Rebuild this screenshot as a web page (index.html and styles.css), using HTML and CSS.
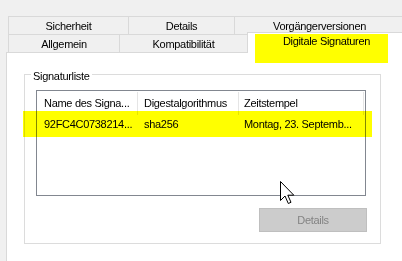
FILE: index.html
```html
<!doctype html>
<html><head>
<meta charset="utf-8">
<title>Eigenschaften - Digitale Signaturen</title>
<link rel="stylesheet" href="styles.css">
</head><body>
<div class="dialog">
	<div class="tabs">
		<div class="tab-row">
			<div class="tab tab-sicherheit">Sicherheit</div>
			<div class="tab tab-details">Details</div>
			<div class="tab tab-versionen">Vorgängerversionen</div>
		</div>
		<div class="tab-row row-front">
			<div class="tab tab-allgemein">Allgemein</div>
			<div class="tab tab-kompat">Kompatibilität</div>
			<div class="tab tab-active">Digitale Signaturen<span class="mark mark-tab"></span></div>
		</div>
	</div>
	<div class="page">
		<div class="group">
			<span class="group-title">Signaturliste</span>
			<div class="list">
				<div class="list-head">
					<div class="cell col-name">Name des Signa...</div>
					<div class="cell col-algo">Digestalgorithmus</div>
					<div class="cell col-time">Zeitstempel</div>
				</div>
				<div class="list-row">
					<div class="cell col-name">92FC4C0738214...</div>
					<div class="cell col-algo">sha256</div>
					<div class="cell col-time">Montag, 23. Septemb...</div>
				</div>
			</div>
			<button class="btn" disabled>Details</button>
			<span class="mark mark-row"></span>
		</div>
		<svg class="cursor" width="16" height="24" viewBox="0 0 16 24">
			<path d="M0.5 0.5 V19.5 L5 15 L8.3 22.5 L11 21.3 L7.8 14.2 H13.8 Z" fill="#fff" stroke="#000" stroke-width="1" stroke-linejoin="miter"/>
		</svg>
	</div>
</div>
</body></html>
```
FILE: styles.css
```css
body {
	margin: 0;
	background: #f0f0f0;
	font: 11px/16px 'Liberation Sans', Arial, sans-serif;
	letter-spacing: -0.3px;
	color: #000;
	overflow: hidden;
}

.dialog {
	width: 402px;
	height: 261px;
	display: flex;
	flex-direction: column;
}

.tabs {
	padding: 16px 0 0 8px;
	white-space: nowrap;
}

.tab-row {
	display: flex;
	align-items: flex-start;
	height: 18px;
}

.tab {
	flex: none;
	box-sizing: border-box;
	height: 18px;
	border: 1px solid #d9d9d9;
	border-bottom: none;
	background: #f0f0f0;
	text-align: center;
	line-height: 16px;
	padding-top: 1px;
}
.tab + .tab {
	margin-left: -1px;
}

.tab-sicherheit { width: 121px; }
.tab-details { width: 107px; }
.tab-versionen { width: 171px; }
.tab-allgemein { width: 112px; }
.tab-kompat { width: 129px; }

.tab-active {
	position: relative;
	z-index: 1;
	width: 159px;
	height: 21px;
	margin-top: -2px;
	background: #fff;
	padding-top: 0;
}

.mark {
	position: absolute;
	background: #ffff00;
	mix-blend-mode: multiply;
}
.mark-tab {
	left: 7px;
	top: 1px;
	width: 133px;
	height: 29px;
}
.mark-row {
	left: -2px;
	top: 36px;
	width: 349px;
	height: 26px;
}

.page {
	position: relative;
	flex: 1;
	margin-left: 6px;
	border-left: 1px solid #d9d9d9;
	border-top: 1px solid #d9d9d9;
	background: #fff;
}

.group {
	position: relative;
	box-sizing: border-box;
	width: 357px;
	height: 170px;
	margin: 21px 0 0 17px;
	border: 1px solid #dcdcdc;
	display: flex;
	flex-direction: column;
	align-items: flex-start;
}

.group-title {
	position: absolute;
	left: 6px;
	top: -7px;
	padding: 0 2px;
	background: #fff;
}

.list {
	box-sizing: border-box;
	width: 330px;
	height: 106px;
	margin: 15px 0 0 11px;
	border: 1px solid #828790;
}

.list-head, .list-row {
	display: flex;
	white-space: nowrap;
}

.list-head {
	height: 24px;
}
.list-head .cell {
	box-sizing: border-box;
	height: 23px;
	margin-top: 1px;
	padding-top: 3px;
	border-right: 1px solid #e5e5e5;
}

.list-row {
	height: 18px;
}
.list-row .cell {
	padding-top: 1px;
}

.cell {
	flex: none;
	box-sizing: border-box;
	overflow: hidden;
	padding-left: 6px;
}
.col-name { width: 101px; padding-left: 7px; }
.col-algo { width: 101px; }
.col-time { width: 125px; padding-left: 5px; }

.btn {
	align-self: flex-end;
	box-sizing: border-box;
	width: 108px;
	height: 24px;
	margin: 12px 13px 0 0;
	padding: 0;
	border: 1px solid #bfbfbf;
	background: #cccccc;
	color: #838383;
	font: inherit;
	letter-spacing: inherit;
	line-height: 20px;
}

.cursor {
	position: absolute;
	left: 273px;
	top: 128px;
}
```
